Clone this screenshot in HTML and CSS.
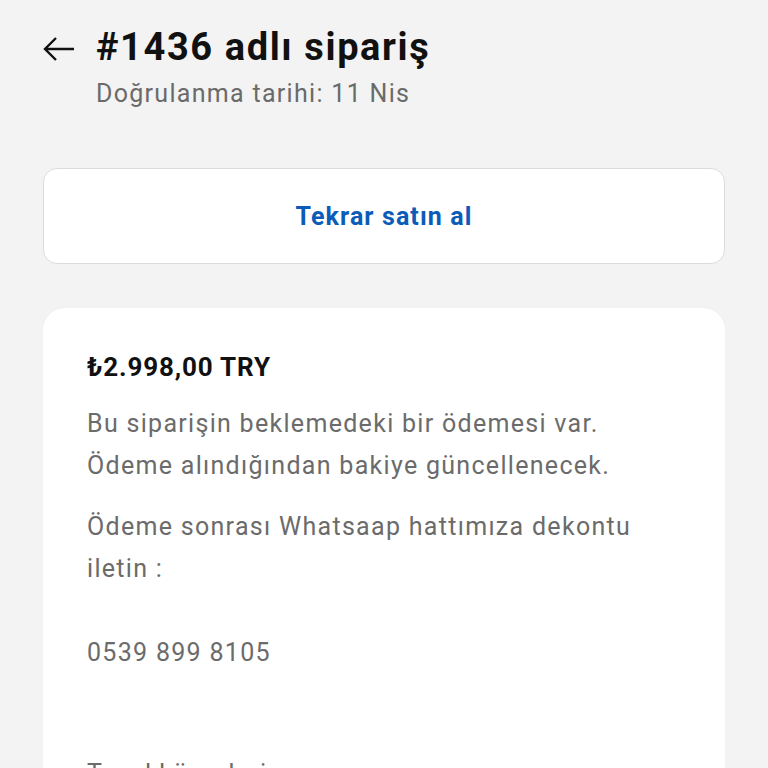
FILE: index.html
```html
<!DOCTYPE html>
<html lang="tr">
<head>
<meta charset="utf-8">
<link rel="stylesheet" href="styles.css">
</head>
<body>
<div class="page">
  <header class="header">
    <svg class="back" viewBox="0 0 32 26" width="32" height="26" aria-hidden="true">
      <path d="M31 13H3M13 2L2 13l11 11" fill="none" stroke="#111" stroke-width="2.4" stroke-linecap="butt" stroke-linejoin="miter"/>
    </svg>
    <div class="titles">
      <h1 class="title">#1436 adlı sipariş</h1>
      <div class="subtitle">Doğrulanma tarihi: 11 Nis</div>
    </div>
  </header>

  <button class="rebuy">Tekrar satın al</button>

  <section class="card">
    <div class="price">₺2.998,00 TRY</div>
    <p class="text">Bu siparişin beklemedeki bir ödemesi var.<br>Ödeme alındığından bakiye güncellenecek.</p>
    <p class="text">Ödeme sonrası Whatsaap hattımıza dekontu iletin :</p>
    <p class="text phone">0539 899 8105</p>
    <p class="text thanks">Teşekkür ederiz</p>
  </section>
</div>
</body>
</html>
```

FILE: styles.css
```css
html, body {
  margin: 0;
  padding: 0;
  background: #f3f3f3;
}
body {
  font-family: Roboto, "Noto Sans", sans-serif;
  height: 768px;
  overflow: hidden;
}
.page {
  padding: 0 43px;
}
.header {
  display: flex;
  align-items: flex-start;
  gap: 21px;
  padding-top: 22px;
}
.back {
  margin-top: 14px;
  flex: none;
}
.title {
  margin: 0;
  font-size: 38px;
  font-weight: 700;
  letter-spacing: 1.6px;
  color: #111;
  line-height: 50px;
}
.subtitle {
  margin-top: 4px;
  font-size: 25px;
  letter-spacing: 1.3px;
  color: #6a6a6a;
  line-height: 36px;
}
.rebuy {
  display: block;
  width: 100%;
  height: 96px;
  margin-top: 56px;
  background: #fff;
  border: 1px solid #dcdcdc;
  border-radius: 14px;
  font-family: Roboto, "Noto Sans", sans-serif;
  font-size: 25px;
  font-weight: 700;
  letter-spacing: 1.1px;
  color: #0b5cb8;
  cursor: pointer;
}
.card {
  margin-top: 44px;
  background: #fff;
  border-radius: 22px;
  padding: 40px 44px 40px;
  box-shadow: 0 0 2px rgba(0,0,0,0.04);
}
.price {
  font-size: 26px;
  font-weight: 700;
  letter-spacing: 0.85px;
  color: #111;
  line-height: 38px;
}
.text {
  margin: 0;
  font-size: 25px;
  letter-spacing: 1.3px;
  line-height: 42px;
  color: #6b6b6b;
}
.price + .text {
  margin-top: 17px;
}
.text + .text {
  margin-top: 19px;
}
.text.phone {
  margin-top: 42px;
}
.text.thanks {
  margin-top: 79px;
}
```
